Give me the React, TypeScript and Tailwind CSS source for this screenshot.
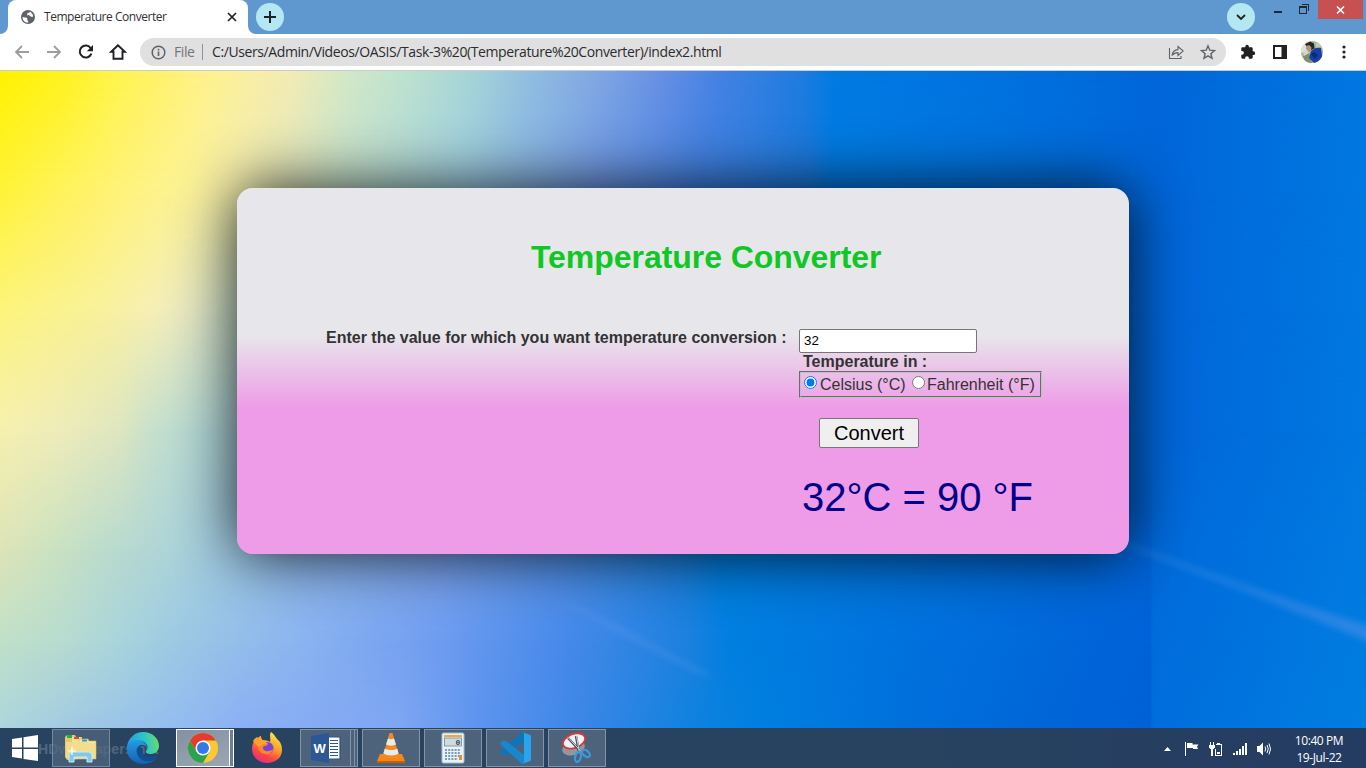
import React from "react";

type Stop = [number, string];
type Row = { y: number; stops: Stop[] };

const BLUE: Stop[] = [
  [835, "#007be2"],
  [1000, "#0072de"],
  [1160, "#0066da"],
  [1250, "#006edc"],
  [1366, "#0078e0"],
];

const ROWS: Row[] = [
  { y: 0, stops: [[0, "#fff200"], [60, "#fff31c"], [120, "#fff44e"], [200, "#fff288"], [250, "#faefa4"], [290, "#f3ecb4"], [350, "#d2e8c8"], [410, "#bce2d0"], [480, "#a2d2d8"], [530, "#90bee0"], [590, "#82abe2"], [660, "#6890e4"], [720, "#4482e4"], [800, "#1f7ce0"], ...BLUE] },
  { y: 120, stops: [[0, "#fff338"], [60, "#fff25a"], [120, "#fff37a"], [190, "#fcf298"], [230, "#f6eeac"], [290, "#dfe6bc"], [350, "#c2e0cc"], [460, "#a0cfe0"], [600, "#6e98e6"], [700, "#4080e0"], [810, "#1a78dc"], ...BLUE] },
  { y: 240, stops: [[0, "#fdf47c"], [100, "#f9f19c"], [150, "#f6efb4"], [190, "#e8e9c2"], [230, "#cfe2cc"], [300, "#b0d6d8"], [500, "#80a8ea"], [700, "#3080e0"], ...BLUE] },
  { y: 360, stops: [[0, "#f6f0b0"], [60, "#eeecba"], [120, "#dde6c0"], [150, "#c8e0cc"], [200, "#b4d8d4"], [280, "#a0cce0"], [500, "#70a0e8"], [700, "#2080e0"], ...BLUE] },
  { y: 480, stops: [[0, "#dde4b8"], [50, "#cbe2c0"], [100, "#bcdccc"], [170, "#acd4d8"], [230, "#9ec8e2"], [300, "#8eb8ea"], [440, "#7ca4ee"], [560, "#5490e8"], [680, "#1c80de"], [720, "#007fe0"], [960, "#0070dc"], [1150, "#0063d7"], [1153, "#006adb"], [1366, "#007ae0"]] },
  { y: 570, stops: [[0, "#c0e0c8"], [60, "#b8dcd0"], [120, "#a8d4dc"], [180, "#9cc8e4"], [300, "#8ab4f0"], [430, "#719df0"], [560, "#488aea"], [690, "#1c80de"], [730, "#007fe0"], [960, "#006edc"], [1150, "#0062d8"], [1153, "#006cdb"], [1366, "#007ce0"]] },
  { y: 657, stops: [[0, "#acd6dc"], [80, "#a0c8e4"], [180, "#92bcf0"], [240, "#8cb0f4"], [400, "#7ea6f2"], [480, "#5c94ee"], [580, "#3c86e6"], [690, "#1082de"], [760, "#007fe0"], [950, "#006cda"], [1150, "#0060d6"], [1153, "#006edc"], [1366, "#007ee0"]] },
];

function Wallpaper() {
  return (
    <svg className="absolute inset-0" width="1366" height="657" viewBox="0 0 1366 657">
      <defs>
        {ROWS.map((r, i) => (
          <linearGradient key={i} id={`row${i}`} gradientUnits="userSpaceOnUse" x1="0" y1="0" x2="1366" y2="0">
            {r.stops.map(([x, c], j) => (
              <stop key={j} offset={x / 1366} stopColor={c} />
            ))}
          </linearGradient>
        ))}
        {ROWS.slice(1).map((r, i) => (
          <React.Fragment key={i}>
            <linearGradient id={`fade${i + 1}`} gradientUnits="userSpaceOnUse" x1="0" y1={ROWS[i].y} x2="0" y2={r.y}>
              <stop offset="0" stopColor="#fff" stopOpacity="0" />
              <stop offset="1" stopColor="#fff" />
            </linearGradient>
            <mask id={`mask${i + 1}`} maskUnits="userSpaceOnUse" x="0" y="0" width="1366" height="657" style={{ maskType: "alpha" }}>
              <rect width="1366" height="657" fill={`url(#fade${i + 1})`} />
            </mask>
          </React.Fragment>
        ))}
        <linearGradient id="streak" x1="0" y1="0" x2="1" y2="0">
          <stop offset="0" stopColor="#2a86e4" stopOpacity=".35" />
          <stop offset="1" stopColor="#3d8be6" stopOpacity=".75" />
        </linearGradient>
        <filter id="soft" x="-20%" y="-20%" width="140%" height="140%">
          <feGaussianBlur stdDeviation="3" />
        </filter>
      </defs>
      <rect width="1366" height="657" fill="url(#row0)" />
      {ROWS.slice(1).map((_, i) => (
        <rect key={i} width="1366" height="657" fill={`url(#row${i + 1})`} mask={`url(#mask${i + 1})`} />
      ))}
      <path d="M1129 471L1250 515L1375 557V573L1250 523L1129 478z" fill="url(#streak)" filter="url(#soft)" />
      <path d="M545 520L620 555L715 606L700 604L600 553z" fill="#6a9cf0" opacity=".25" filter="url(#soft)" />
    </svg>
  );
}

function TitleBar() {
  return (
    <div className="flex h-[34px] shrink-0 bg-[#5f98cf]">
      <div className="relative ml-2 flex h-[34px] w-60 items-center rounded-t-[8px] bg-white pl-3 pr-[10px]">
        <svg className="absolute -left-2 bottom-0" width="8" height="8"><path d="M8 0v8H0a8 8 0 0 0 8-8" fill="#fff" /></svg>
        <svg className="absolute -right-2 bottom-0" width="8" height="8"><path d="M0 0v8h8a8 8 0 0 1-8-8" fill="#fff" /></svg>
        <svg width="16" height="16" viewBox="0 0 16 16">
          <circle cx="8" cy="8" r="7" fill="#5f6368" />
          <path d="M2.6 8.2c1.5.2 3.3-.1 4.4.8.9.8-.3 1.7.6 2.4.6.5 1 1.200.3 2.300C4.700 13.500 2.400 11 2.600 8.200zM9.700 2.700c-.3 1.200-1.500.9-2.200 1.500-.6.7.2 1.200-.5 1.700.9.8 2.400.2 3.200 1 .7.7 1.300 1.100 2.900.8.100-2.300-1.300-4.300-3.400-5z" fill="#fff" />
        </svg>
        <span className="ml-2 w-[170px] whitespace-nowrap font-['Open_Sans',sans-serif] text-[12px] leading-4 tracking-[-0.460px] text-[#2f3236]">Temperature Converter</span>
        <svg className="ml-auto" width="12" height="12" viewBox="0 0 12 12"><path d="M2 2l8 8M10 2l-8 8" stroke="#202124" strokeWidth="1.700" /></svg>
      </div>
      <div className="ml-2 mt-[3px] flex h-7 w-7 items-center justify-center rounded-full bg-[#b3e7f1]">
        <svg width="12" height="12" viewBox="0 0 12 12"><path d="M6 0v12M0 6h12" stroke="#202124" strokeWidth="2" /></svg>
      </div>
      <div className="ml-auto mr-[10px] mt-[3px] flex h-7 w-7 items-center justify-center rounded-full bg-[#b3e7f1]">
        <svg width="10" height="7" viewBox="0 0 10 7"><path d="M1 1l4 4 4-4" fill="none" stroke="#202124" strokeWidth="1.800" /></svg>
      </div>
      <div className="flex w-[53px] items-start">
        <svg width="53" height="18" viewBox="0 0 53 18" shapeRendering="crispEdges">
          <path d="M9 11h8v2H9z" fill="#20272e" />
          <path d="M34.500 6.500h7v7h-7zM34 7.500h8M37 4.500h6.500V11" fill="none" stroke="#20272e" />
        </svg>
      </div>
      <div className="mr-[3px] flex h-[19px] w-[45px] items-center justify-center bg-[#c75050]">
        <svg width="9" height="8" viewBox="0 0 9 8"><path d="M1 .5l7 7M8 .5l-7 7" stroke="#fff" strokeWidth="1.600" /></svg>
      </div>
    </div>
  );
}

function Toolbar() {
  return (
    <div className="flex h-[37px] shrink-0 items-center border-b border-[#c9cbcd] bg-white font-['Open_Sans',sans-serif]">
      <div className="flex w-[140px] items-center gap-4 pl-[14px]">
        <svg width="16" height="16" viewBox="0 0 16 16" fill="none" stroke="#9b9c9e" strokeWidth="1.800"><path d="M15 8H2M8 2L2 8l6 6" /></svg>
        <svg width="16" height="16" viewBox="0 0 16 16" fill="none" stroke="#9b9c9e" strokeWidth="1.800"><path d="M1 8h13M8 2l6 6-6 6" /></svg>
        <svg width="16" height="16" viewBox="0 0 16 16"><path d="M13.400 9.700A6 6 0 1 1 12.600 4" fill="none" stroke="#202124" strokeWidth="2" /><path d="M15 1v6.300H8.800z" fill="#202124" /></svg>
        <svg className="-ml-px" width="18" height="18" viewBox="0 0 18 18"><path d="M9 2.200L2.200 8.800h2.300v7h9v-7h2.300z" fill="none" stroke="#202124" strokeWidth="1.900" /></svg>
      </div>
      <div className="flex h-7 w-[1086px] items-center rounded-full bg-[#e0e0e0] pl-[11px] pr-[10px] text-[14px] leading-5 tracking-[-0.400px]">
        <svg width="15" height="15" viewBox="0 0 15 15"><circle cx="7.500" cy="7.500" r="6.300" fill="none" stroke="#5f6368" strokeWidth="1.500" /><path d="M6.700 6.500h1.600v4.500H6.700zM6.700 3.800h1.600v1.600H6.700z" fill="#5f6368" /></svg>
        <span className="ml-2 w-[28px] text-[#72767a]">File</span>
        <span className="mr-[9px] h-4 w-px bg-[#8f9296]" />
        <span className="whitespace-nowrap text-[#2b2c2f]">C:/Users/Admin/Videos/OASIS/Task-3%20(Temperature%20Converter)/index2.html</span>
        <svg className="ml-auto" width="16" height="16" viewBox="0 0 16 16" fill="none" stroke="#5f6368" strokeWidth="1.100"><path d="M1.500 4v10.500h11.500V12" /><path d="M4 11.500C4.500 7.500 7 5.800 10 5.600V2.500L15.200 7l-5.200 4.500V8.600C7 8.600 5.300 9.700 4 11.500z" /></svg>
        <svg className="ml-4" width="16" height="16" viewBox="0 0 16 16" fill="none" stroke="#5f6368" strokeWidth="1.400"><path d="M8 1.900l1.800 4.300 4.700.4-3.600 3.100 1.100 4.600L8 11.800l-4 2.500 1.100-4.600-3.600-3.100 4.700-.4z" /></svg>
      </div>
      <div className="flex items-center pl-[14px]">
        <svg width="16" height="16" viewBox="0 0 16 16" fill="#202124"><path d="M13.300 7.300h-.6V4.500c0-.7-.6-1.200-1.300-1.200H8.900v-.7a1.800 1.800 0 0 0-3.600 0v.7H2.500c-.7 0-1.200.5-1.200 1.200v2.400H2a1.900 1.900 0 0 1 0 3.800h-.7v2.800c0 .7.500 1.200 1.200 1.200h2.600v-.6a1.900 1.900 0 0 1 3.800 0v.6h2.500c.7 0 1.300-.5 1.300-1.200V11h.6a1.850 1.850 0 0 0 0-3.700z" /></svg>
        <svg className="ml-4" width="16" height="16" viewBox="0 0 16 16"><path d="M1 1h14v14H1zM3 3v10h6.500V3z" fill="#202124" fillRule="evenodd" /></svg>
        <svg className="ml-[13px]" width="22" height="22" viewBox="0 0 22 22">
          <defs><clipPath id="face"><circle cx="11" cy="11" r="11" /></clipPath></defs>
          <g clipPath="url(#face)">
            <rect width="22" height="22" fill="#a9b69d" />
            <path d="M0 0h9v9L0 12z" fill="#dfe3dc" /><path d="M2 15l6-3 3 10H4z" fill="#7d906b" /><path d="M2 10l5-1 1 3-5 3z" fill="#d0d7c5" />
            <path d="M4 3l5-2.500 4 2 .5 5L8 10z" fill="#24282c" />
            <path d="M5 5l3-1 2.500 2.500-.5 3L8 11 5 8z" fill="#bf9078" />
            <path d="M10 10l6-4 4 1 2 15-9 0-5-5z" fill="#1740a5" /><path d="M13 11l4 3-3 4-4-5z" fill="#0b2879" />
            <path d="M15 2l6 1v3l-6 1z" fill="#bdcdb3" />
          </g>
        </svg>
        <svg className="ml-[19px]" width="4" height="14" viewBox="0 0 4 14" fill="#202124"><circle cx="2" cy="2" r="1.600" /><circle cx="2" cy="7" r="1.600" /><circle cx="2" cy="12" r="1.600" /></svg>
      </div>
    </div>
  );
}

function Converter() {
  return (
    <main className="relative h-[657px] shrink-0 overflow-hidden pt-[117px] font-['Liberation_Sans',sans-serif]">
      <Wallpaper />
      <section className="relative ml-[237px] flex h-[366px] w-[892px] flex-col rounded-[16px] bg-[linear-gradient(180deg,#e7e7eb_40%,#ee9ce7_60%)] pt-[50px] shadow-[0_0_60px_#000000d8]">
        <h1 className="pl-[294px] text-[32px] font-bold leading-[38px] tracking-[-0.050px] text-[#0fc824]">Temperature Converter</h1>
        <div className="mt-[53px] flex text-[16px] leading-[18px] text-[#333]">
          <label className="w-[562px] shrink-0 whitespace-nowrap pl-[89px] font-bold">Enter the value for which you want temperature conversion :</label>
          <div className="flex flex-col items-start">
            <input className="h-6 w-[178px] rounded-[2px] border border-[#767676] bg-white px-1 pb-[2px] text-[13.333px] text-black" defaultValue="32" />
            <p className="pl-1 font-bold">Temperature in :</p>
            <div className="flex h-[27px] w-[243px] items-center whitespace-nowrap border-2 border-[#c0c0c0] pl-[3px] [border-style:groove]">
              <input type="radio" name="unit" defaultChecked className="mb-1 h-[13px] w-[13px] shrink-0" />
              <span className="ml-[3px] w-[92px] pt-px">Celsius (°C)</span>
              <input type="radio" name="unit" className="mb-1 h-[13px] w-[13px] shrink-0" />
              <span className="ml-[2px] pt-px">Fahrenheit (°F)</span>
            </div>
            <button className="ml-5 mt-[20px] h-[30px] w-[100px] rounded-[2px] border border-[#767676] bg-[#efefef] text-[20px] leading-6 text-black">Convert</button>
            <output className="mt-[26px] whitespace-nowrap pl-[3px] text-[40px] leading-[46px] text-[#00008b]">32°C = 90 °F</output>
          </div>
        </div>
      </section>
    </main>
  );
}

const winBtn = "flex h-[38px] shrink-0 items-center justify-center border border-[#8594a5] bg-[#4d637b]";

function Taskbar() {
  return (
    <footer className="relative flex h-10 shrink-0 items-center bg-[linear-gradient(90deg,#27435f_0%,#28435f_60%,#243c62_100%)]">
      <span className="absolute left-[38px] top-[13px] whitespace-nowrap font-['Liberation_Sans',sans-serif] text-[14px] font-bold leading-4 tracking-[0.200px] text-[#52677f]">HDwallpapers.net</span>
      <svg className="relative ml-[11px]" width="28" height="28" viewBox="0 0 28 28" fill="#fff"><path d="M1 5l10-1.500v10H1zM12.500 3.200L27 1v12.500H12.500zM1 15h10v9.500L1 23zM12.500 15H27v12l-14.500-2z" /></svg>
      <div className="relative ml-[13px] flex h-[38px] w-[58px] items-center justify-center border border-[#76889b] bg-[#526880]/70">
        <svg width="34" height="30" viewBox="0 0 34 30">
          <path d="M1 4l2-2h8l1 2h6v22l-15 1L1 24z" fill="#e2c96e" /><path d="M3 2h5v3H3z" fill="#23b143" /><path d="M8 4h8l1 2h7v20H8z" fill="#f2e29b" /><path d="M10 4h5v2h-5z" fill="#d94b35" />
          <path d="M15 6h9l1 2h7v18H15z" fill="#f6e6a0" stroke="#d1b65c" strokeWidth=".6" /><path d="M18 6.500h5v2h-5z" fill="#2799e4" /><path d="M2 9h22l1 1h6v15H2z" fill="#f3dd8e" opacity=".9" />
          <path d="M5 29v-8l3-2h17l3 2v8h-5v-5H10v5z" fill="#84c8e8" stroke="#c5ebfa" /><path d="M8 14v8M4 18h8" stroke="#fff" strokeWidth="1.200" />
        </svg>
      </div>
      <div className="relative flex w-[66px] justify-center">
        <svg width="34" height="34" viewBox="0 0 34 34">
          <defs>
            <linearGradient id="eg" x1="0" y1=".5" x2="1" y2=".4"><stop offset="0" stopColor="#259ddc" /><stop offset=".55" stopColor="#2bc4ce" /><stop offset="1" stopColor="#68dc68" /></linearGradient>
            <linearGradient id="eb" x1="0" y1="0" x2="0" y2="1"><stop offset="0" stopColor="#249ce2" /><stop offset="1" stopColor="#1660b4" /></linearGradient>
          </defs>
          <path d="M1 16C2 7 9 1 17 1c10 0 16 7 16 14 0 5-4 8-8 8-3 0-6-1-5-3 2-2 2-4 1-6-2-4-6-5-10-4C6 11 3 13 1 16z" fill="url(#eg)" />
          <path d="M1 17c1-5 5-8 10-8 6 0 10 4 10 8-1-2-3-3-5-3-4 0-6 4-5 8 2 6 7 9 13 8 2 0 4-2 6-3-3 4-8 6-13 6C8 33 0 26 1 17z" fill="url(#eb)" />
          <path d="M11 22c-1-4 1-7 4-8-2 6 2 11 8 12 3 0 6-1 7-2 1 0 2 1 1 2-2 3-5 4-7 4-6 1-11-2-13-8z" fill="#114d91" />
        </svg>
      </div>
      <div className="relative flex h-[38px] w-[54px] items-center justify-center border border-white bg-[linear-gradient(160deg,#8391a2,#9aa6b4)]">
        <svg className="-ml-px" width="32" height="32" viewBox="0 0 32 32">
          <circle cx="16" cy="16" r="15" fill="#fcc934" />
          <path d="M3 8.500A15 15 0 0 1 29 8.500H16L9.500 19.700z" fill="#e33b2e" />
          <path d="M3 8.500A15 15 0 0 0 16 31l6.500-11.200L9.500 19.700z" fill="#2ba24c" />
          <circle cx="16" cy="16" r="7.500" fill="#fff" /><circle cx="16" cy="16" r="6" fill="#3478ea" />
        </svg>
      </div>
      <div className="h-[38px] w-1 border border-l-0 border-white bg-[#6f8093]" />
      <div className="flex w-[66px] justify-center">
        <svg width="32" height="32" viewBox="0 0 32 32">
          <defs><linearGradient id="ff" x1=".8" y1="0" x2=".3" y2="1"><stop offset="0" stopColor="#fff04c" /><stop offset=".45" stopColor="#ff9b27" /><stop offset=".75" stopColor="#fb4449" /><stop offset="1" stopColor="#e42e80" /></linearGradient></defs>
          <path d="M20 0c3 2 4 4 6 7 4 3 5 7 5 11 0 8-7 13-15 13S1 25 1 17C1 12 3 9 5 6c0 2 0 2 1 2 1-3 3-4 4-4 0 2 1 4 2 4 3 0 6 1 7 2 1-3-1-7 1-10z" fill="url(#ff)" />
          <circle cx="16.500" cy="16" r="6" fill="#7445d8" /><path d="M7 10c4-1 7 1 10 2-2 3-5 1-5 4 0 4 7 4 10 1-1 4-4 6-8 5-6-1-9-6-7-12z" fill="#ff842b" /><path d="M2 9c2-3 3-3 4-4l4 4c4 0 5 1 7 3-5-1-7 1-9 3z" fill="#ffa22d" />
        </svg>
      </div>
      <div className={winBtn + " w-[51px]"}>
        <svg width="30" height="30" viewBox="0 0 30 30"><path d="M16 4h13v22H16z" fill="#fff" stroke="#2d5391" strokeWidth="1.200" /><path d="M19 7.500h8M19 10.500h8M19 13.500h8M19 16.500h8M19 19.500h8M19 22.500h8" stroke="#2b5797" strokeWidth="1.200" /><path d="M0 3l18-3v30L0 27z" fill="#2b5797" /><text x="2.500" y="20" fontFamily="Liberation Sans" fontSize="13" fontWeight="700" fill="#fff">W</text></svg>
      </div>
      <div className="h-[38px] w-[4px] border border-l-0 border-[#8594a5] bg-[#4d637b]" />
      <div className="mr-1 h-[38px] w-[3px] border border-l-0 border-[#8594a5] bg-[#4d637b]" />
      <div className={winBtn + " mr-1 w-[58px]"}>
        <svg width="28" height="32" viewBox="0 0 28 32"><path d="M3 22h22l3 7v2H0v-2z" fill="#f68618" /><path d="M0 29h28v2H0z" fill="#c95f05" /><path d="M12.500 1h3L22 24c-3 3-13 3-16 0z" fill="#f68b1d" /><path d="M11 6.500c2 1 4 1 6 0l2 6c-3 1.500-7 1.500-10 0zM7.800 16.500c4 2 9 2 12.400 0l1.500 5c-4 2.500-11 2.500-15.400 0z" fill="#e9ebed" /></svg>
      </div>
      <div className={winBtn + " mr-1 w-[58px]"}>
        <svg width="24" height="32" viewBox="0 0 24 32"><rect x="1" y="1" width="22" height="30" rx="1.500" fill="#e8f2f8" stroke="#9cc1d8" /><path d="M3 3h18v2H3z" fill="#f7a534" /><rect x="3.500" y="6" width="17" height="8" fill="#cddbe2" stroke="#607b8d" strokeWidth=".7" /><text x="14.500" y="13" fontFamily="Liberation Mono" fontSize="8" fontWeight="700" fill="#284457">0</text><path d="M4 18h16M4 21h16M4 24h16M4 27h13" stroke="#7f9bb0" strokeWidth="2" strokeDasharray="2 1.200" /><path d="M18 23h3v5h-3z" fill="#f28c20" /></svg>
      </div>
      <div className={winBtn + " mr-1 w-[58px]"}>
        <svg width="33" height="32" viewBox="0 0 33 32"><path d="M23 0L2 19c-1 1-1 2 0 3l2 1c1 1 2 0 3 0L25 9V0z" fill="#0f75b8" /><path d="M23 32L2 13c-1-1-1-2 0-3l2-1c1-1 2 0 3 0l18 14v9z" fill="#1787ce" /><path d="M23 0l8 3c1 0 1 1 1 2v22c0 1 0 2-1 2l-8 3c1 0 2 0 2-2V2c0-1-1-2-2-2z" fill="#27a5ef" /></svg>
      </div>
      <div className={winBtn + " w-[58px]"}>
        <svg width="32" height="32" viewBox="0 0 32 32"><ellipse cx="12.500" cy="16" rx="11.500" ry="7" transform="rotate(-15 12.500 16)" fill="#9298a2" /><ellipse cx="13" cy="9" rx="11.500" ry="7" transform="rotate(-20 13 9)" fill="#f0f2f5" stroke="#d93838" strokeWidth="1.800" /><path d="M7 6l14 15M15 4l3 17" stroke="#48525f" strokeWidth="2.400" /><path d="M7 5.500l14 15M15.500 4l3 17" stroke="#c8d1d8" /><ellipse cx="17" cy="25" rx="2.800" ry="5" transform="rotate(15 17 25)" fill="none" stroke="#3a9bdc" strokeWidth="2.200" /><ellipse cx="25" cy="21.500" rx="4.500" ry="2.800" transform="rotate(40 25 21.500)" fill="none" stroke="#3a9bdc" strokeWidth="2.200" /></svg>
      </div>
      <div className="ml-auto flex items-center pt-px">
        <svg width="7" height="4" viewBox="0 0 7 4"><path d="M3.500 0L7 4H0z" fill="#fff" /></svg>
        <svg className="ml-[13px]" width="16" height="16" viewBox="0 0 16 16"><path d="M1.500 1v14" stroke="#fff" /><path d="M3 2h5.500v1.500H14.500l-1.500 2L14 8H9V7H3z" fill="#fff" /></svg>
        <svg className="ml-2" width="16" height="16" viewBox="0 0 16 16" shapeRendering="crispEdges"><path d="M2 1h1v3H2zM5 1h1v3H5zM1 4h6v3H6v1H5v7H3V8H2V7H1z" fill="#fff" /><path d="M8 3.500h5.500v11h-6V8M9 2.500h3" fill="none" stroke="#fff" /><path d="M9 11h3v2H9z" fill="#fff" /></svg>
        <svg className="ml-2" width="16" height="16" viewBox="0 0 16 16" fill="#fff"><path d="M1 12h2v2H1zM4 10h2v4H4zM7 8h2v6H7zM10 5h2v9h-2zM13 2h2v12h-2z" /></svg>
        <svg className="ml-2" width="16" height="16" viewBox="0 0 16 16"><path d="M1 5h2.500L7 1.500v13L3.500 11H1z" fill="#fff" /><path d="M9 5.500q1.500 2.500 0 5M11 4q2.500 4 0 8M13 2.500q3 5.500 0 11" fill="none" stroke="#fff" /></svg>
      </div>
      <div className="ml-4 mr-4 flex w-[62px] flex-col items-center whitespace-nowrap pt-px font-['Open_Sans',sans-serif] text-[12px] leading-[17px] tracking-[-0.400px] text-white">
        <span>10:40 PM</span>
        <span>19-Jul-22</span>
      </div>
    </footer>
  );
}

export default function App() {
  return (
    <div className="flex h-[768px] w-[1366px] flex-col overflow-hidden">
      <TitleBar />
      <Toolbar />
      <Converter />
      <Taskbar />
    </div>
  );
}
